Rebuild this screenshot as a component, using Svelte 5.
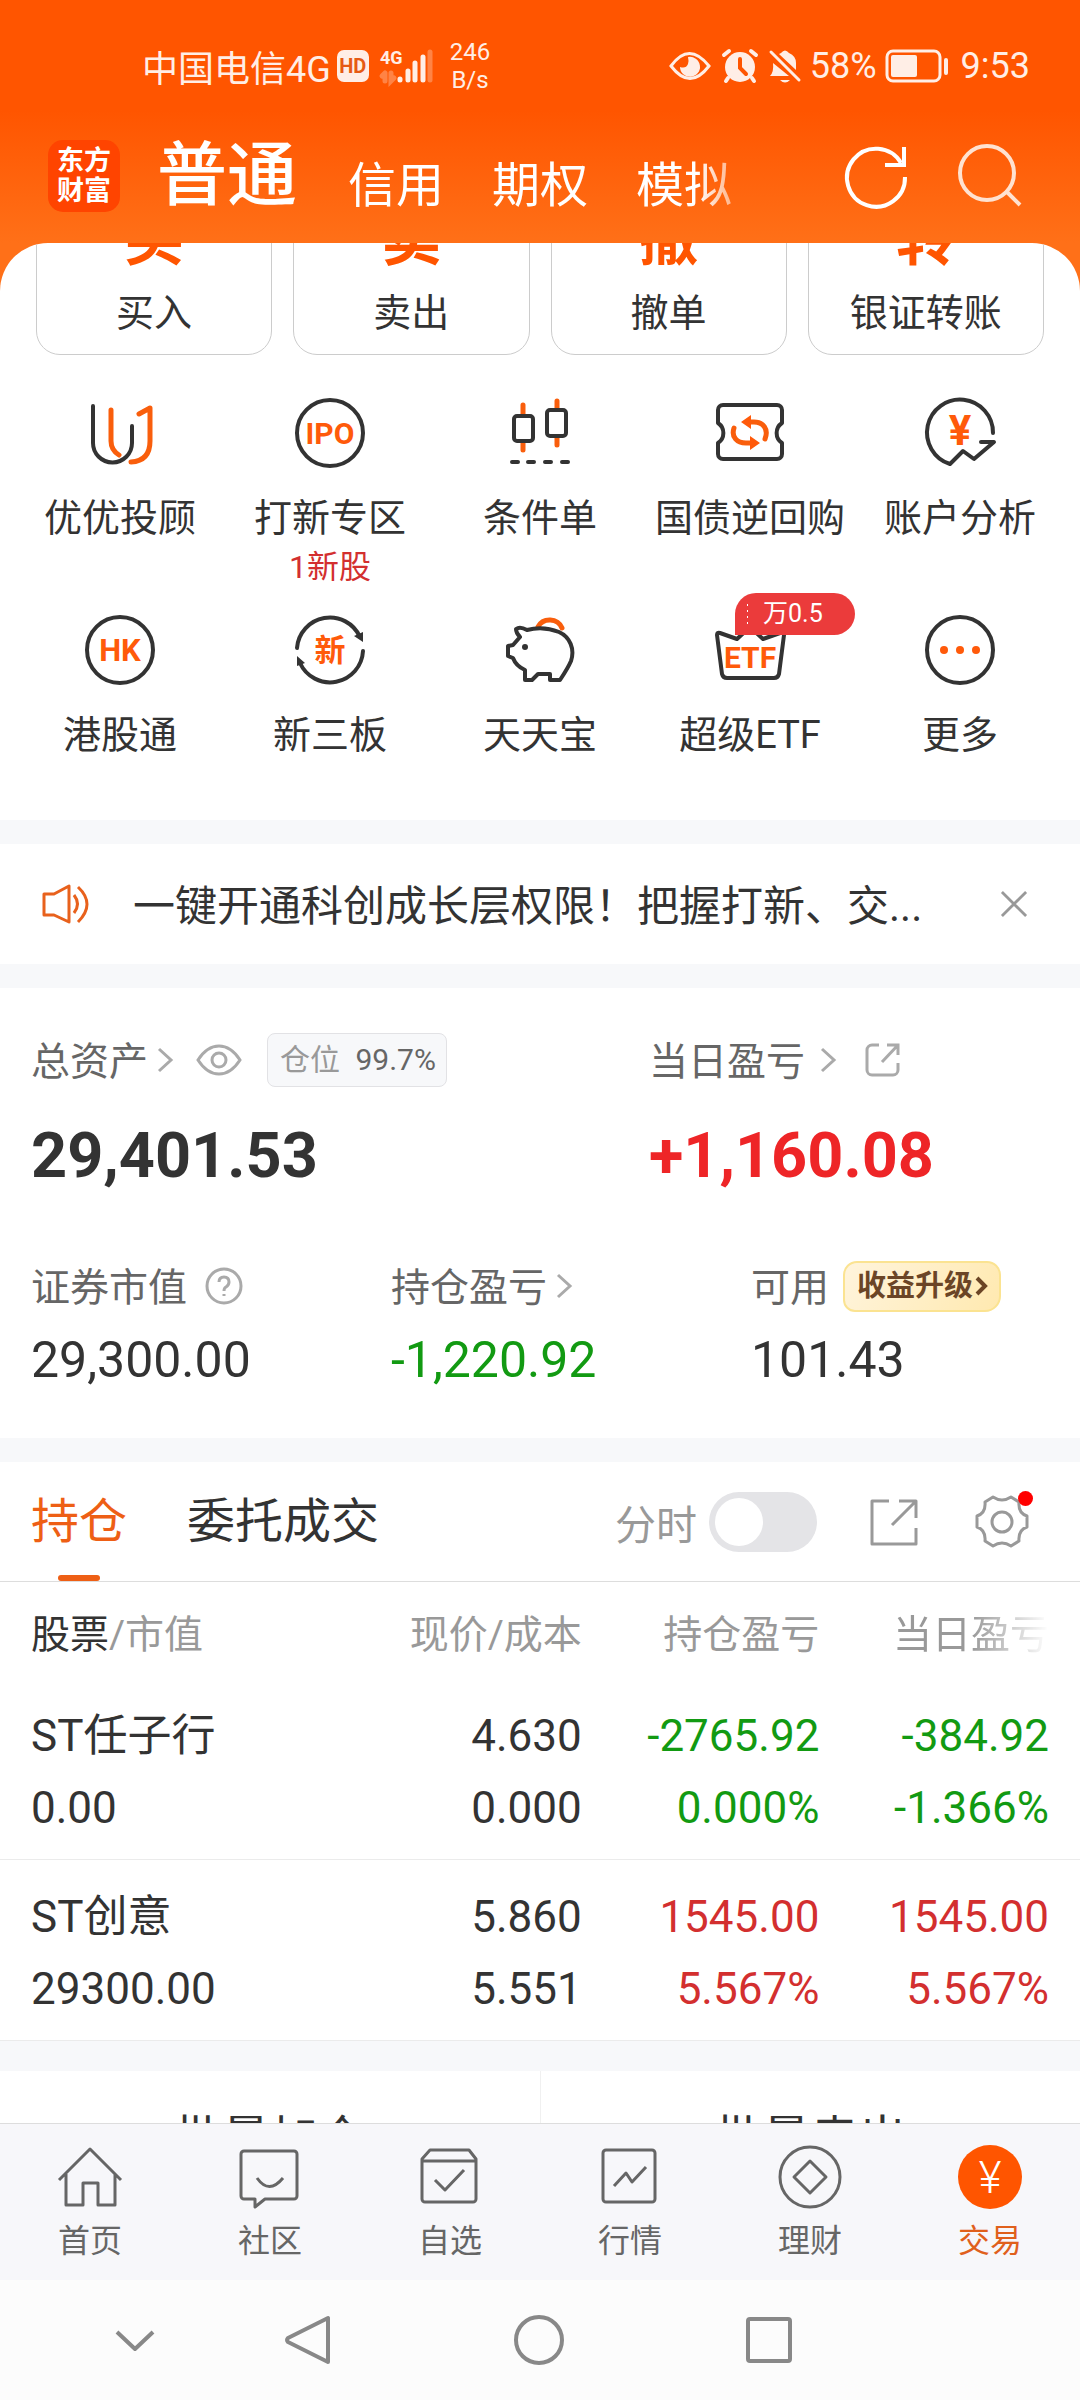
<script lang="ts">
  type Tone = 'up' | 'down';

  const accounts = ['信用', '期权', '模拟'];

  const quick = [
    { glyph: '买', label: '买入' },
    { glyph: '卖', label: '卖出' },
    { glyph: '撤', label: '撤单' },
    { glyph: '转', label: '银证转账' },
  ];

  const services: { icon: string; label: string; note?: string; badge?: string }[] = [
    { icon: 'advisor', label: '优优投顾' },
    { icon: 'ipo', label: '打新专区', note: '1新股' },
    { icon: 'candles', label: '条件单' },
    { icon: 'repo', label: '国债逆回购' },
    { icon: 'analysis', label: '账户分析' },
    { icon: 'hk', label: '港股通' },
    { icon: 'neeq', label: '新三板' },
    { icon: 'pig', label: '天天宝' },
    { icon: 'etf', label: '超级ETF', badge: '万0.5' },
    { icon: 'more', label: '更多' },
  ];

  const holdings: {
    name: string;
    value: string;
    price: string;
    cost: string;
    total: [string, string];
    day: [string, string];
    tone: Tone;
  }[] = [
    {
      name: 'ST任子行',
      value: '0.00',
      price: '4.630',
      cost: '0.000',
      total: ['-2765.92', '0.000%'],
      day: ['-384.92', '-1.366%'],
      tone: 'down',
    },
    {
      name: 'ST创意',
      value: '29300.00',
      price: '5.860',
      cost: '5.551',
      total: ['1545.00', '5.567%'],
      day: ['1545.00', '5.567%'],
      tone: 'up',
    },
  ];

  const nav = [
    { icon: 'home', label: '首页' },
    { icon: 'community', label: '社区' },
    { icon: 'watch', label: '自选' },
    { icon: 'market', label: '行情' },
    { icon: 'wealth', label: '理财' },
    { icon: 'trade', label: '交易' },
  ];

  let noticeOpen = $state(true);
  let intraday = $state(false);
  let tab = $state('持仓');
  let page = $state('交易');
</script>

{#snippet chevron()}
  <svg class="chevron" viewBox="0 0 18 26" aria-hidden="true"><path d="M3 2 15 13 3 24" /></svg>
{/snippet}

{#snippet serviceIcon(name: string)}
  <svg class="service-icon" viewBox="0 0 72 72" aria-hidden="true">
    {#if name === 'advisor'}
      <path d="M9 9V46a19.500 19.500 0 0 0 39 0V29" />
      <path class="hot" d="M27 13V44q0 9 8 14M47 65Q66 64 66 44V11L55 17" />
    {:else if name === 'ipo'}
      <circle cx="36" cy="36" r="33" />
      <text x="36" y="47" font-size="30">IPO</text>
    {:else if name === 'candles'}
      <path class="hot" d="M19 8V18M19 46V53M53 4V12M53 41V48" />
      <rect x="10" y="19" width="19" height="25" rx="3" />
      <rect x="43" y="13" width="19" height="26" rx="3" />
      <path d="M8 65h6M24 65h6M41 65h6M58 65h6" />
    {:else if name === 'repo'}
      <path d="M9 8H63a5 5 0 0 1 5 5V26a12 12 0 0 0 0 20V57a5 5 0 0 1-5 5H9a5 5 0 0 1-5-5V46a12 12 0 0 0 0-20V13a5 5 0 0 1 5-5Z" />
      <path class="hot" d="M20 31C17 40 23 46 32 46h6M51 42C55 32 49 25 40 25H34" />
      <path class="fill" d="M27 25 37 18V32ZM46 46 36 39V53Z" />
    {:else if name === 'analysis'}
      <path d="M69 36A33 33 0 1 0 26 67L39 54 50 62 70 45H57" />
      <text x="36" y="48" font-size="42">¥</text>
    {:else if name === 'hk'}
      <circle cx="36" cy="36" r="33" />
      <text x="36" y="47" font-size="31">HK</text>
    {:else if name === 'neeq'}
      <path d="M3 34A33 33 0 0 1 66 23M69 37A33 33 0 0 1 6 49" />
      <path class="ink" d="M60 22 69 18V28ZM3 52V42L11 49Z" />
      <text x="36" y="47" font-size="31">新</text>
    {:else if name === 'pig'}
      <path class="hot" d="M34 13A13 12 0 0 1 58 14" />
      <path d="M12 15q4-3 11 1c11-3 22-2 32 2 11 5 16 17 12 29-3 7-7 13-11 19H46V60H34L28 66H21V56Q12 52 9 44L4 42V32L9 31 16 23Q12 19 12 15Z" />
      <circle class="ink" cx="21" cy="33" r="3" />
    {:else if name === 'etf'}
      <path d="M3 21Q3 18 6 19L23 25 36 13 49 25 66 19Q70 18 70 21L65 60q-1 4-5 4H13q-4 0-5-4Z" />
      <text x="36" y="54" font-size="30">ETF</text>
    {:else}
      <circle cx="36" cy="36" r="33" />
      <circle class="fill" cx="20" cy="36" r="4" />
      <circle class="fill" cx="36" cy="36" r="4" />
      <circle class="fill" cx="52" cy="36" r="4" />
    {/if}
  </svg>
{/snippet}

{#snippet navIcon(name: string)}
  <svg class="nav-icon" viewBox="0 0 64 64" aria-hidden="true">
    {#if name === 'home'}
      <path d="M1 35 32 4 63 35M8 29V60H25V38H40V60H57V29" />
    {:else if name === 'community'}
      <path d="M6 6H56a3 3 0 0 1 3 3V51a3 3 0 0 1-3 3H27L17 62V54H6a3 3 0 0 1-3-3V9a3 3 0 0 1 3-3ZM19 33q12 17 26 0" />
    {:else if name === 'watch'}
      <path d="M4 14 12 5H51L58 14V54a3 3 0 0 1-3 3H7a3 3 0 0 1-3-3ZM4 16H58M17 35 27 45 46 25" />
    {:else if name === 'market'}
      <path d="M8 5H54a3 3 0 0 1 3 3V54a3 3 0 0 1-3 3H8a3 3 0 0 1-3-3V8a3 3 0 0 1 3-3ZM16 41 28 28 34 37 48 22" />
    {:else if name === 'wealth'}
      <circle cx="32" cy="32" r="30" />
      <path d="M32 16 48 32 32 48 16 32Z" />
    {:else}
      <circle class="disc" cx="32" cy="32" r="32" />
      <text x="32" y="48" font-size="44">¥</text>
    {/if}
  </svg>
{/snippet}

<div class="app">
  <header>
    <div class="status">
      <span>中国电信4G</span>
      <span class="hd">HD</span>
      <svg class="signal" viewBox="0 0 54 34" aria-hidden="true">
        <text x="0" y="15" font-size="18">4G</text>
        <path class="dim" d="M5 32V24M2 27 5 24M11 24V32L14 29" />
        <path d="M20 30V31M28 22V31M35 14V31M43 8V31" />
        <path class="dim" d="M50 3V31" />
      </svg>
      <span class="speed">246<br />B/s</span>
      <svg class="st-eye" viewBox="0 0 42 30" aria-hidden="true">
        <path d="M2 15Q20-10 40 15 21 40 2 15Z" fill="none" stroke="currentColor" stroke-width="3" />
        <path d="M19 6a10 10 0 1 1-8 10q6 2 8-3 1-3 0-7Z" fill="currentColor" />
      </svg>
      <svg class="st-alarm" viewBox="0 0 36 34" aria-hidden="true">
        <circle cx="18" cy="18" r="15" fill="currentColor" />
        <path d="M2 6 7 2M34 6 29 2M6 29 4 32M30 29 32 32" stroke="currentColor" stroke-width="4" stroke-linecap="round" />
        <path d="M18 10v9l6 6" fill="none" stroke="#ff5500" stroke-width="4" stroke-linecap="round" />
      </svg>
      <svg class="st-bell" viewBox="0 0 32 34" aria-hidden="true">
        <path d="M12 4Q16-1 20 4q7 3 7 10v7L10 5ZM4 14 20 27H1q4-4 3-13ZM11 31h10q-5 5-10 0Z" fill="currentColor" />
        <path d="M2 3 30 31" stroke="currentColor" stroke-width="3" stroke-linecap="round" />
      </svg>
      <span>58%</span>
      <svg class="battery" viewBox="0 0 64 34" aria-hidden="true">
        <rect x="2" y="2" width="53" height="30" rx="6" fill="none" stroke="currentColor" stroke-width="3" />
        <rect x="6" y="6" width="26" height="22" rx="2" fill="currentColor" />
        <rect x="59" y="9" width="4" height="17" rx="2" fill="currentColor" />
      </svg>
      <span>9:53</span>
    </div>

    <div class="title-bar">
      <div class="logo">东方<br />财富</div>
      <nav class="accounts" aria-label="账户类型">
        <button class="current">普通</button>
        {#each accounts as account}
          <button>{account}</button>
        {/each}
      </nav>
      <button class="tool" aria-label="刷新">
        <svg viewBox="0 0 66 66"><path d="M62 34A29 29 0 1 1 58 20M61 4V22H42" /></svg>
      </button>
      <button class="tool soft" aria-label="搜索">
        <svg viewBox="0 0 66 66"><circle cx="30" cy="30" r="27" /><path d="M50 49 63 62" /></svg>
      </button>
    </div>
  </header>

  <main>
    <section class="shortcuts">
      <div class="quick">
        {#each quick as item}
          <button>
            <b aria-hidden="true">{item.glyph}</b>
            <span>{item.label}</span>
          </button>
        {/each}
      </div>
      <div class="services">
        {#each services as item}
          <button>
            {@render serviceIcon(item.icon)}
            {#if item.badge}<i class="badge">{item.badge}</i>{/if}
            <span>{item.label}</span>
            {#if item.note}<small>{item.note}</small>{/if}
          </button>
        {/each}
      </div>
    </section>

    {#if noticeOpen}
      <section class="notice">
        <svg class="speaker" viewBox="0 0 48 42" aria-hidden="true">
          <path d="M2 11H12L27 3V39L12 32H2ZM32 12q7 9 0 18M36 4q18 17 0 35" />
        </svg>
        <a href="#notice">一键开通科创成长层权限！把握打新、交...</a>
        <button aria-label="关闭" onclick={() => (noticeOpen = false)}>
          <svg viewBox="0 0 28 28"><path d="M1 1 27 27M27 1 1 27" /></svg>
        </button>
      </section>
    {/if}

    <section class="assets">
      <div class="totals">
        <div>
          <div class="label">
            <span>总资产</span>
            {@render chevron()}
            <svg class="eye" viewBox="0 0 46 32" aria-hidden="true">
              <path d="M2 16Q11 2 23 2T44 16Q35 30 23 30T2 16Z" />
              <circle cx="23" cy="16" r="7" />
            </svg>
            <div class="chip">仓位 <em>99.7%</em></div>
          </div>
          <strong>29,401.53</strong>
        </div>
        <div>
          <div class="label wide">
            <span>当日盈亏</span>
            {@render chevron()}
            <svg class="share" viewBox="0 0 36 36" aria-hidden="true">
              <path d="M14 3H7A5 5 0 0 0 2 8V28a5 5 0 0 0 5 5H28a5 5 0 0 0 5-5V21M22 3H33V13M33 3 17 20" />
            </svg>
          </div>
          <strong class="gain">+1,160.08</strong>
        </div>
      </div>
      <div class="details">
        <div>
          <div class="label">
            <span>证券市值</span>
            <svg class="help" viewBox="0 0 38 38" aria-hidden="true">
              <circle cx="19" cy="19" r="17" />
              <path d="M14 15q0-5 5-5t5 5q0 3-3 5-2 1-2 4M19 27v2" />
            </svg>
          </div>
          <p>29,300.00</p>
        </div>
        <div>
          <div class="label">
            <span>持仓盈亏</span>
            {@render chevron()}
          </div>
          <p class="down">-1,220.92</p>
        </div>
        <div>
          <div class="label">
            <span>可用</span>
            <a class="upgrade" href="#upgrade">
              收益升级<svg viewBox="0 0 12 20" aria-hidden="true"><path d="M2 2 10 10 2 18" /></svg>
            </a>
          </div>
          <p>101.43</p>
        </div>
      </div>
    </section>

    <section class="positions">
      <div class="tabs">
        {#each ['持仓', '委托成交'] as name}
          <button class="tab" class:active={tab === name} onclick={() => (tab = name)}>{name}</button>
        {/each}
        <label class="switch">分时<input type="checkbox" bind:checked={intraday} /></label>
        <button class="icon-button" aria-label="分享">
          <svg viewBox="0 0 54 54"><path d="M22 6H5V49H49V33M32 6H49V23M49 6 25 30" /></svg>
        </button>
        <button class="icon-button" aria-label="设置">
          <svg viewBox="0 0 54 54">
            <path d="M18 2Q27 8 36 2L44 7Q43 18 52 21V32Q43 35 44 46L36 51Q27 45 18 51L10 46Q11 35 2 32V21Q11 18 10 7Z" />
            <circle cx="27" cy="27" r="10" />
          </svg>
          <i class="dot"></i>
        </button>
      </div>
      <table>
        <thead>
          <tr>
            <th><b>股票</b>/市值</th>
            <th>现价/成本</th>
            <th>持仓盈亏</th>
            <th><span class="fade">当日盈亏</span></th>
          </tr>
        </thead>
        <tbody>
          {#each holdings as row}
            <tr>
              <td>{row.name}<br />{row.value}</td>
              <td>{row.price}<br />{row.cost}</td>
              <td class={row.tone}>{row.total[0]}<br />{row.total[1]}</td>
              <td class={row.tone}>{row.day[0]}<br />{row.day[1]}</td>
            </tr>
          {/each}
        </tbody>
      </table>
      <div class="batch">
        <button>批量加仓</button>
        <button>批量卖出</button>
      </div>
    </section>
  </main>

  <nav class="tabbar" aria-label="主导航">
    {#each nav as item}
      <button class:active={page === item.label} onclick={() => (page = item.label)}>
        {@render navIcon(item.icon)}
        <span>{item.label}</span>
      </button>
    {/each}
  </nav>

  <div class="system">
    <button aria-label="收起"><svg viewBox="0 0 50 50"><path d="M7 17 25 34 43 17" /></svg></button>
    <button aria-label="返回"><svg viewBox="0 0 50 50"><path d="M44 3V47L4 27q-2-2 0-4Z" /></svg></button>
    <button aria-label="主页"><svg viewBox="0 0 50 50"><circle cx="25" cy="25" r="23" /></svg></button>
    <button aria-label="最近任务"><svg viewBox="0 0 50 50"><rect x="4" y="4" width="42" height="42" rx="2" /></svg></button>
  </div>
</div>

<style>
  :global(body) { margin: 0; background: #fff; }

  .app {
    display: flex;
    flex-direction: column;
    height: 100vh;
    overflow: hidden;
    background: #f7f8fa;
    color: #333;
    font-family: Roboto, "Noto Sans CJK SC", sans-serif;
    font-size: 38px;
  }
  button {
    padding: 0;
    border: 0;
    background: none;
    color: inherit;
    font: inherit;
  }
  a { color: inherit; text-decoration: none; }
  svg { display: block; flex: none; overflow: visible; }
  i, em { font-style: normal; }

  header {
    flex: none;
    padding-bottom: 71px;
    background: linear-gradient(#ff5500 110px, #ff7018 243px);
    color: #fff;
  }
  .status {
    display: flex;
    align-items: center;
    height: 132px;
    padding: 0 50px 0 142px;
    color: #ffeee6;
    font-size: 36px;
  }
  .hd {
    width: 32px;
    margin: 0 11px 0 6px;
    border-radius: 7px;
    background: #ffeee6;
    color: #e65a14;
    font-size: 20px;
    font-weight: 700;
    line-height: 32px;
    text-align: center;
  }
  .signal { width: 54px; height: 34px; }
  .signal text { fill: currentColor; font-weight: 700; }
  .signal path { fill: none; stroke: currentColor; stroke-width: 5; stroke-linecap: round; }
  .signal .dim { opacity: 0.3; }
  .speed {
    margin: 0 auto 0 16px;
    font-size: 24px;
    line-height: 28px;
    text-align: center;
  }
  .st-eye { width: 42px; height: 30px; }
  .st-alarm { width: 36px; height: 34px; margin: 0 11px; }
  .st-bell { width: 32px; height: 34px; margin-right: 9px; }
  .battery { width: 64px; height: 34px; margin: 0 12px 0 8px; }

  .title-bar {
    display: flex;
    align-items: center;
    height: 88px;
    padding: 0 57px 0 48px;
  }
  .logo {
    box-sizing: border-box;
    flex: none;
    width: 72px;
    height: 72px;
    padding-top: 6px;
    border-radius: 15px;
    background: #ff4400;
    font-size: 27px;
    font-weight: 700;
    line-height: 30px;
    text-align: center;
  }
  .accounts {
    flex: 1;
    display: flex;
    align-items: flex-end;
    gap: 48px;
    margin: 0 76px 0 37px;
    font-size: 48px;
    line-height: 68px;
    white-space: nowrap;
    mask-image: linear-gradient(90deg, #000 540px, transparent 612px);
  }
  .accounts .current {
    margin-right: 3px;
    font-size: 70px;
    font-weight: 500;
    line-height: 88px;
  }
  .tool + .tool { margin-left: 48px; }
  .tool svg {
    width: 66px;
    height: 66px;
    fill: none;
    stroke: currentColor;
    stroke-width: 4;
  }
  .soft { color: #ffe2d0; }

  main {
    flex: 1;
    min-height: 0;
    margin-top: -48px;
    border-radius: 48px 48px 0 0;
    overflow: hidden;
  }
  section { background: #fff; margin-bottom: 24px; }

  .shortcuts { display: flow-root; padding-bottom: 57px; }
  .quick {
    display: grid;
    grid-template-columns: repeat(4, 1fr);
    gap: 21px;
    margin: -47px 36px 42px;
  }
  .quick button {
    display: flex;
    flex-direction: column;
    align-items: center;
    padding: 7px 0 13px;
    border: 1px solid #ccc;
    border-radius: 24px;
  }
  .quick b { margin-bottom: 9px; color: #ff5500; font-size: 60px; line-height: 72px; }
  .quick span { line-height: 56px; }
  .services {
    display: grid;
    grid-template-columns: repeat(5, 1fr);
    row-gap: 26px;
    padding: 0 15px;
  }
  .services button {
    position: relative;
    display: flex;
    flex-direction: column;
    align-items: center;
    white-space: nowrap;
  }
  .services span { margin-top: 21px; line-height: 56px; }
  .services small { color: #d32f2f; font-size: 32px; line-height: 42px; }
  .service-icon {
    width: 72px;
    height: 72px;
    fill: none;
    stroke: #333;
    stroke-width: 4;
    stroke-linecap: round;
    stroke-linejoin: round;
  }
  .service-icon .hot { stroke: #f95e0c; stroke-width: 5; }
  .service-icon .fill { fill: #ff5a0a; stroke: none; }
  .service-icon .ink { fill: #333; stroke: none; }
  .service-icon text {
    fill: #ff5a0a;
    stroke: none;
    font-weight: 700;
    text-anchor: middle;
  }
  .badge {
    position: absolute;
    top: -21px;
    left: 90px;
    box-sizing: border-box;
    width: 120px;
    padding-left: 28px;
    border-radius: 21px 21px 21px 0;
    background: #eb3b3b;
    color: #fff;
    font-size: 25px;
    line-height: 42px;
    text-align: left;
  }
  .badge::before {
    content: "";
    position: absolute;
    top: 11px;
    left: 12px;
    width: 1px;
    height: 20px;
    background: repeating-linear-gradient(#fff 0 2px, transparent 2px 6px);
  }

  .notice {
    display: flex;
    align-items: center;
    height: 120px;
    padding: 0 53px 0 42px;
    font-size: 42px;
  }
  .notice a {
    flex: 1;
    margin: 0 40px 0 43px;
    padding-bottom: 4px;
    overflow: hidden;
    white-space: nowrap;
    text-overflow: ellipsis;
  }
  .speaker { width: 48px; height: 42px; fill: none; stroke: #e8611c; stroke-width: 3; stroke-linejoin: round; }
  .notice button svg { width: 26px; height: 26px; stroke: #999; stroke-width: 3; }

  .assets { padding: 36px 0 40px; }
  .totals { display: grid; grid-template-columns: 618fr 462fr; }
  .details { display: grid; grid-template-columns: repeat(3, 1fr); margin-top: 34px; }
  .totals > div, .details > div { padding-left: 31px; }
  .label {
    display: flex;
    align-items: center;
    height: 72px;
    color: #666;
    font-size: 39px;
    white-space: nowrap;
  }
  .label span { padding-bottom: 4px; }
  .label svg { fill: none; stroke: #aaa; stroke-width: 3; }
  .chevron { width: 18px; height: 26px; margin-left: 8px; }
  .wide .chevron { margin-left: 14px; }
  .eye { width: 46px; height: 32px; margin: 0 25px 0 22px; }
  .share { width: 36px; height: 36px; margin-left: 28px; }
  .help { width: 38px; height: 38px; margin-left: 18px; }
  .chip {
    padding: 0 10px 0 12px;
    border: 1px solid #e2e2e5;
    border-radius: 8px;
    background: #f7f8fa;
    color: #999;
    font-size: 30px;
    line-height: 52px;
  }
  .chip em { margin-left: 8px; color: #666; }
  strong { display: block; font-size: 63px; line-height: 120px; }
  .gain { color: #ee2527; }
  .details p { margin: 0; font-size: 50px; line-height: 76px; }
  .label .upgrade {
    display: flex;
    align-items: center;
    gap: 2px;
    margin-left: 14px;
    padding: 0 12px;
    border: 2px solid #fbe391;
    border-radius: 14px 14px 16px 12px;
    background: linear-gradient(120deg, #fff4dc, #ffe9b0);
    color: #6b4526;
    font-size: 29px;
    font-weight: 700;
    line-height: 47px;
  }
  .label .upgrade svg { width: 12px; height: 20px; stroke: #6b4526; stroke-width: 4; }

  .up { color: #d32f2f; }
  .down { color: #129a12; }

  .positions { margin: 0; background: none; }
  .tabs {
    display: flex;
    align-items: center;
    gap: 54px;
    height: 119px;
    padding: 0 51px 0 31px;
    border-bottom: 1px solid #ddd;
    background: #fff;
  }
  .tab { position: relative; font-size: 48px; line-height: 119px; }
  .tab + .tab { margin-left: 6px; }
  .tab.active { color: #ee5f15; }
  .tab.active::after {
    content: "";
    position: absolute;
    bottom: 0;
    left: 50%;
    width: 42px;
    height: 6px;
    margin-left: -21px;
    border-radius: 3px;
    background: #ee5f15;
  }
  .switch {
    display: flex;
    align-items: center;
    gap: 12px;
    margin-left: auto;
    color: #999;
    font-size: 41px;
  }
  .switch input {
    appearance: none;
    display: flex;
    width: 108px;
    height: 60px;
    margin: 0;
    padding: 6px;
    box-sizing: border-box;
    border-radius: 30px;
    background: #e4e4e7;
  }
  .switch input::before {
    content: "";
    width: 48px;
    height: 48px;
    border-radius: 50%;
    background: #fff;
  }
  .switch input:checked { justify-content: flex-end; background: #ff5500; }
  .icon-button { position: relative; }
  .switch + .icon-button { margin-left: -4px; }
  .icon-button svg {
    width: 54px;
    height: 54px;
    fill: none;
    stroke: #999;
    stroke-width: 3;
    stroke-linejoin: round;
  }
  .dot {
    position: absolute;
    top: -4px;
    right: -4px;
    width: 15px;
    height: 15px;
    border-radius: 50%;
    background: #f00;
  }

  table {
    width: 100%;
    table-layout: fixed;
    border-collapse: collapse;
    background: #fff;
    white-space: nowrap;
  }
  th {
    height: 97px;
    padding: 0;
    color: #999;
    font-size: 39px;
    font-weight: 400;
    text-align: right;
  }
  th b { color: #333; font-weight: 400; }
  th:nth-child(1) { width: 28%; }
  th:nth-child(2) { width: 23%; }
  th:nth-child(3) { width: 22%; }
  td {
    padding: 21px 0 15px;
    border-bottom: 1px solid #ebebeb;
    font-size: 44px;
    line-height: 72px;
    text-align: right;
  }
  th:first-child, td:first-child { padding-left: 31px; text-align: left; }
  th:last-child, td:last-child { padding-right: 31px; }
  .fade { mask-image: linear-gradient(90deg, #000 50%, transparent); }

  .batch {
    display: grid;
    grid-template-columns: 1fr 1fr;
    margin-top: 30px;
    background: #fff;
  }
  .batch button { font-size: 48px; line-height: 136px; }
  .batch button + button { border-left: 1px solid #f0f0f0; }

  .tabbar {
    flex: none;
    display: grid;
    grid-template-columns: repeat(6, 1fr);
    border-top: 1px solid #ddd;
    background: #f7f7fa;
    color: #666;
    font-size: 32px;
  }
  .tabbar button {
    display: flex;
    flex-direction: column;
    align-items: center;
    padding: 21px 0 15px;
  }
  .tabbar span { margin-top: 8px; line-height: 48px; }
  .tabbar .active { color: #e0601c; }
  .nav-icon { width: 64px; height: 64px; fill: none; stroke: #666; stroke-width: 3; stroke-linejoin: round; }
  .nav-icon .disc { fill: #ff5500; stroke: none; }
  .nav-icon text { fill: #fff; stroke: none; font-weight: 300; text-anchor: middle; }

  .system {
    flex: none;
    display: grid;
    grid-template-columns: 118fr 230fr 230fr 230fr 196fr;
    align-items: center;
    justify-items: center;
    height: 120px;
    padding-left: 7%;
    background: #fcfcfc;
  }
  .system svg {
    width: 50px;
    height: 50px;
    fill: none;
    stroke: #888;
    stroke-width: 4;
    stroke-linejoin: round;
  }
</style>
